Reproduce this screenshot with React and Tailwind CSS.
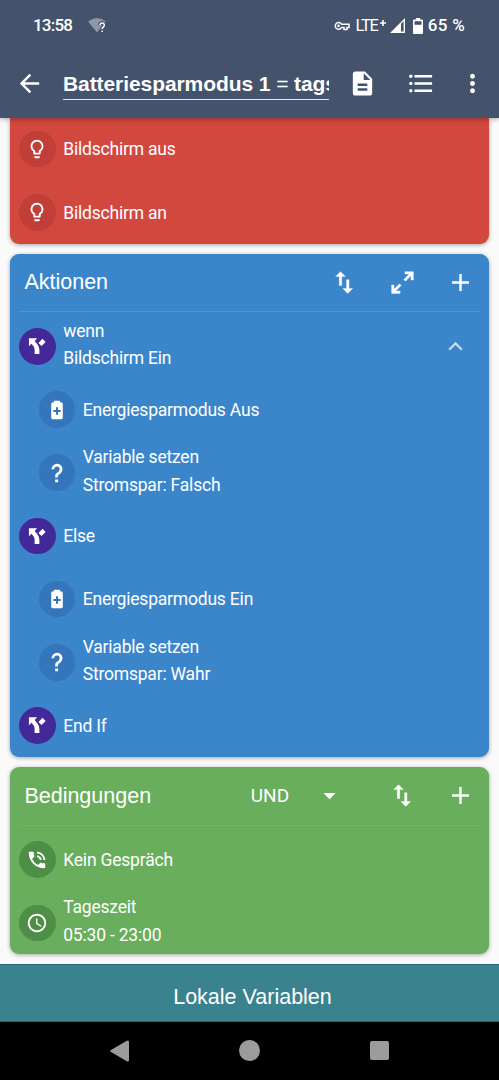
import {
  MdAccessTime,
  MdAdd,
  MdArrowBack,
  MdArrowDropDown,
  MdDescription,
  MdKeyboardArrowUp,
  MdLightbulbOutline,
  MdMoreVert,
  MdPhoneInTalk,
} from 'react-icons/md';
import clsx from 'clsx';

function Svg({ className, children, viewBox = '0 0 24 24' }) {
  return (
    <svg viewBox={viewBox} fill="currentColor" className={clsx('shrink-0', className)}>
      {children}
    </svg>
  );
}

const ForkIcon = () => (
  <Svg className="size-[22px]">
    <path d="M3.2 3.6V12.2L6 9.6L8.6 12.8Q9.4 14.2 9.4 16V20.8H14.6V16Q14.6 13 12.4 10L9.4 6.6L12.2 3.6ZM13.6 8.8L18 4.2L21.4 7.5L16.9 12.1Z" />
  </Svg>
);

const BatteryPlusIcon = () => (
  <Svg className="size-[22px]">
    <path d="M15.5 3.8V2.8Q15.5 2 14.7 2H9.3Q8.5 2 8.5 2.8V3.8H7.2Q5.7 3.8 5.7 5.3V20.5Q5.7 22 7.2 22H16.8Q18.3 22 18.3 20.5V5.3Q18.3 3.8 16.8 3.8zM16 14.2h-2.9v2.9h-2.2v-2.9H8v-2.3h2.9V9h2.2v2.9H16z" />
  </Svg>
);

const QuestionIcon = () => (
  <Svg className="size-[22px]">
    <path d="M10 19h3.2v3.2H10V19M12 2c5.35.22 7.68 5.62 4.5 9.67-.83 1-2.17 1.66-2.83 2.5C13 15 13 16 13 17h-3c0-1.67 0-3.08.67-4.08.66-1 2-1.59 2.83-2.25C15.92 8.43 15.32 5.26 12 5a3 3 0 0 0-3 3H6a6 6 0 0 1 6-6z" />
  </Svg>
);

const SortIcon = () => (
  <Svg className="size-[29px]">
    <path stroke="currentColor" strokeWidth=".3" d="M8.7 3L4.7 7h3v7.5h2V7h3l-4-4zM15.7 17V9.7h-2V17h-3l4 4 4-4h-3z" />
  </Svg>
);

const ExpandIcon = () => (
  <Svg className="size-[29px]">
    <path stroke="currentColor" strokeWidth=".3" d="M10 21v-2H6.41l4.5-4.5-1.41-1.41-4.5 4.5V14H3v7h7zM14.5 10.91l4.5-4.5V10h2V3h-7v2h3.59l-4.5 4.5 1.41 1.41z" />
  </Svg>
);

const circleColors = {
  red: 'bg-[#c03f38]',
  blue: 'bg-[#3576bb]',
  purple: 'bg-[#43289a]',
  green: 'bg-[#4f8e47]',
};

function Row({ icon, color, title, detail, nested, children }) {
  return (
    <div className={clsx('flex h-[63.2px] items-center pr-[19px]', nested ? 'pl-[29px]' : 'pl-[9.5px]')}>
      <div className={clsx('flex size-[36.5px] shrink-0 items-center justify-center rounded-full', circleColors[color])}>
        {icon}
      </div>
      <div className={clsx('ml-[7.5px] flex-1 text-[17.5px] leading-[27.5px] tracking-[-0.2px]', detail ? 'pb-[2px]' : 'pt-[2px]')}>
        <p>{title}</p>
        {detail && <p>{detail}</p>}
      </div>
      {children}
    </div>
  );
}

function Card({ className, children }) {
  return (
    <section className={clsx('mx-[9.7px] shrink-0 rounded-[9px] shadow-[0_1px_4px_rgba(0,0,0,0.35)]', className)}>
      {children}
    </section>
  );
}

function CardHeader({ title, line, children }) {
  return (
    <div className="h-[61px] px-[9.7px]">
      <div className={clsx('flex h-[58.7px] items-center border-b pl-[5px] pr-[5px]', line)}>
        <h2 className="flex-1 font-['Liberation_Sans'] text-[21.5px]">{title}</h2>
        {children}
      </div>
    </div>
  );
}

function StatusBar() {
  return (
    <div className="flex h-[50px] items-center pl-[33px] pr-[34px] pt-px font-['Roboto',sans-serif] text-[17px] font-medium">
      <span className="tracking-[-0.8px]">13:58</span>
      <Svg className="ml-[16px] h-[17px] w-[20px]" viewBox="0 0 20 17">
        <path opacity=".4" d="M0 4.5Q9 -2.5 18 4.5L9 15.5Z" />
        <path fill="none" stroke="#44526b" strokeWidth="4" d="M11.9 8.2a2.2 2.2 0 1 1 3.4 1.8q-1.2.8-1.2 2M14.1 13.4v1.6" />
        <path fill="none" stroke="currentColor" strokeWidth="1.5" d="M11.9 8.2a2.2 2.2 0 1 1 3.4 1.8q-1.2.8-1.2 2M14.1 13.4v1.6" />
      </Svg>
      <div className="flex-1" />
      <Svg className="h-[10px] w-[16px]" viewBox="0 0 16 10">
        <path fill="none" stroke="currentColor" strokeWidth="1.5" d="M7.6 3.2A3.4 3.4 0 1 0 7.6 6.6H10V8.6H13V6.6H15V3.2Z" />
        <circle cx="4.5" cy="4.9" r="1.3" />
      </Svg>
      <span className="ml-[5.5px] pt-px text-[16.5px] font-normal tracking-[-1.2px]">LTE</span>
      <Svg className="mb-[6px] ml-px size-[8px]" viewBox="0 0 8 8">
        <path d="M3.2 1h1.6v2.2H7v1.6H4.8V7H3.2V4.8H1V3.2h2.2z" />
      </Svg>
      <Svg className="ml-[3px] size-[15px]" viewBox="0 0 15 15">
        <path fillRule="evenodd" d="M15 0V15H0ZM11 5.8V13.6H13.6V3.3Z" />
      </Svg>
      <Svg className="ml-[8px] h-[16px] w-[10px]" viewBox="0 0 10 16">
        <path fillRule="evenodd" d="M3 0H7V1.6H9Q10 1.6 10 2.6V15Q10 16 9 16H1Q0 16 0 15V2.6Q0 1.6 1 1.6H3ZM1.5 3.2V6.8H8.5V3.2Z" />
      </Svg>
      <span className="ml-[5px] tracking-[0.3px]">65 %</span>
    </div>
  );
}

function Toolbar() {
  return (
    <div className="flex h-[67.2px] items-center pl-[15px]">
      <MdArrowBack className="size-[29px] shrink-0" />
      <div className="ml-[19px] h-[32px] w-[265.5px] shrink-0 overflow-hidden whitespace-nowrap border-b border-[#e4e7ec] font-['Liberation_Sans'] text-[21px] font-bold leading-[31px] tracking-[-0.08px]">
        Batteriesparmodus 1 <span className="font-normal">=</span> tags
      </div>
      <MdDescription className="ml-[19px] size-[29px] shrink-0" />
      <Svg className="ml-[29px] size-[29px]">
        <path d="M7 5h14.6v2H7zM7 11h14.6v2H7zM7 17h14.6v2H7z" />
        <circle cx="4" cy="6" r="1.4" />
        <circle cx="4" cy="12" r="1.4" />
        <circle cx="4" cy="18" r="1.4" />
      </Svg>
      <MdMoreVert className="ml-[23px] size-[29px] shrink-0" />
    </div>
  );
}

export default function App() {
  return (
    <div className="flex h-[1080px] w-[499px] flex-col overflow-hidden bg-[#fafafa] font-['Roboto',sans-serif] text-white">
      <header className="relative z-10 h-[117.5px] shrink-0 bg-[#44526b] shadow-[0_1px_5px_rgba(0,0,0,0.35)]">
        <StatusBar />
        <Toolbar />
      </header>

      <main className="flex h-[846.5px] shrink-0 flex-col gap-[9.9px] overflow-hidden">
        <Card className="rounded-t-none bg-[#d2483f]">
          <Row icon={<MdLightbulbOutline className="size-[22px]" />} color="red" title="Bildschirm aus" />
          <Row icon={<MdLightbulbOutline className="size-[22px]" />} color="red" title="Bildschirm an" />
        </Card>

        <Card className="bg-[#3b86cb]">
          <CardHeader title="Aktionen" line="border-[#4c93d6]">
            <SortIcon />
            <span className="ml-[29px] flex"><ExpandIcon /></span>
            <MdAdd className="ml-[29px] size-[29px]" />
          </CardHeader>
          <Row icon={<ForkIcon />} color="purple" title="wenn" detail="Bildschirm Ein">
            <MdKeyboardArrowUp className="size-[29px] opacity-70" />
          </Row>
          <Row nested icon={<BatteryPlusIcon />} color="blue" title="Energiesparmodus Aus" />
          <Row nested icon={<QuestionIcon />} color="blue" title="Variable setzen" detail="Stromspar: Falsch" />
          <Row icon={<ForkIcon />} color="purple" title="Else" />
          <Row nested icon={<BatteryPlusIcon />} color="blue" title="Energiesparmodus Ein" />
          <Row nested icon={<QuestionIcon />} color="blue" title="Variable setzen" detail="Stromspar: Wahr" />
          <Row icon={<ForkIcon />} color="purple" title="End If" />
        </Card>

        <Card className="bg-[#68ae5d]">
          <CardHeader title="Bedingungen" line="border-[#72b568]">
            <span className="pt-px text-[19px]">UND</span>
            <MdArrowDropDown className="ml-[25.5px] size-[29px]" />
            <span className="ml-[44px] flex"><SortIcon /></span>
            <MdAdd className="ml-[29px] size-[29px]" />
          </CardHeader>
          <Row icon={<MdPhoneInTalk className="size-[22px]" />} color="green" title="Kein Gespräch" />
          <Row icon={<MdAccessTime className="size-[22px]" />} color="green" title="Tageszeit" detail="05:30 - 23:00" />
        </Card>
      </main>

      <button className="h-[57.5px] w-full shrink-0 border-y border-[#286873] bg-[#3a828d] pl-[6px] pt-[9px] font-['Liberation_Sans'] text-[21.5px]">
        Lokale Variablen
      </button>

      <nav className="flex flex-1 items-center justify-center bg-black text-[#9b9b9b]">
        <Svg className="h-[22px] w-[19px]" viewBox="0 0 19 22">
          <path d="M1 10Q-.6 11 1 12L16.8 21.3Q19 22.3 19 20V2Q19-.3 16.8.7Z" />
        </Svg>
        <div className="ml-[110px] size-[21px] rounded-full bg-[#9b9b9b]" />
        <div className="ml-[110px] size-[19px] rounded-[2px] bg-[#9b9b9b]" />
      </nav>
    </div>
  );
}
